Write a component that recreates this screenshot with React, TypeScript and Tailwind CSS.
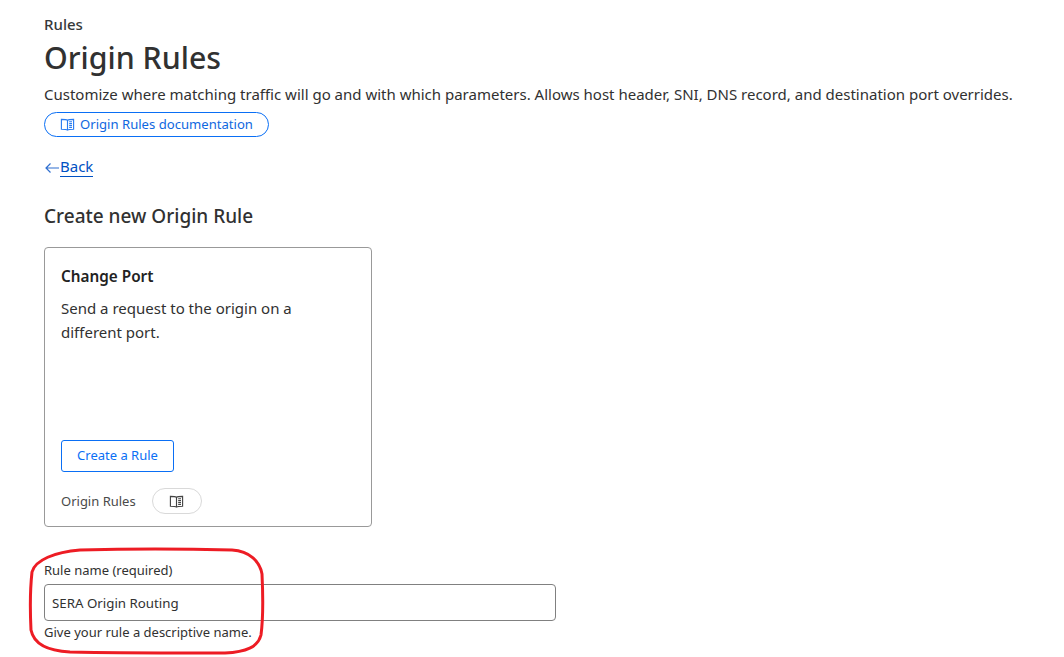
function BookIcon({ className }: { className: string }) {
  return (
    <svg viewBox="0 0 16 16" fill="none" stroke="currentColor" strokeWidth="1.2" className={className}>
      <path d="M8 3.5C7 2.8 5 2.5 1.5 2.5v10.5c3.5 0 5.5.2 6.5 1 1-.8 3-1 6.5-1V2.5C11 2.5 9 2.8 8 3.5zM8 3.5V14" />
      <path d="M9.8 5h3M9.8 7h3M9.8 9h3M9.8 11h3" />
    </svg>
  );
}

export default function App() {
  return (
    <div className="relative h-[657px] w-[1064px] overflow-hidden bg-white pl-[44px] pt-[14px] font-['Noto_Sans',sans-serif] text-[#313131]">
      <p className="text-[15px] leading-[20px] font-medium text-[#36393a]">Rules</p>
      <h1 className="text-[30.3px] leading-[40px] font-medium mt-[4px]">Origin Rules</h1>
      <p className="text-[15px] leading-[20px] mt-[6px] whitespace-nowrap">
        Customize where matching traffic will go and with which parameters. Allows host header, SNI, DNS record, and destination port overrides.
      </p>
      <a className="mt-[8px] flex h-[25px] w-[225px] items-center justify-center gap-[5px] rounded-full border border-[#0a6ff5] text-[13.1px] text-[#1068e0]">
        <BookIcon className="h-[15px] w-[15px] text-[#2a7cf0]" />
        <span>Origin Rules documentation</span>
      </a>
      <div className="mt-[17px] flex h-[24px] items-center text-[15px] text-[#0051c3]">
        <svg viewBox="0 0 16 12" fill="none" stroke="currentColor" strokeWidth="1.2" className="mt-[4px] h-[12px] w-[16px] text-[#2f6fd0]">
          <path d="M15 6H2M6.5 1.5 2 6l4.5 4.5" />
        </svg>
        <span className="border-b border-[#0051c3] leading-[20px]">Back</span>
      </div>
      <h2 className="mt-[26px] text-[19px] leading-[24px] font-medium">Create new Origin Rule</h2>

      <div className="mt-[19px] flex h-[280px] w-[328px] flex-col rounded-[4px] border border-[#999999] px-[16px] pt-[17px]">
        <h3 className="text-[15.3px] leading-[22px] font-semibold text-[#222222]">Change Port</h3>
        <p className="mt-[9px] text-[15px] leading-[24px]">
          Send a request to the origin on a
          <br />
          different port.
        </p>
        <button className="mt-[96px] h-[32px] w-[113px] rounded-[3px] border border-[#0a6ff5] text-[13px] text-[#0a6ff5]">
          Create a Rule
        </button>
        <div className="mt-[16px] flex items-center gap-[16px]">
          <span className="mt-[2px] text-[13px] text-[#4a4a4a]">Origin Rules</span>
          <span className="flex h-[26px] w-[50px] items-center justify-center rounded-full border border-[#d9d9d9]">
            <BookIcon className="h-[15px] w-[15px] text-[#444444]" />
          </span>
        </div>
      </div>

      <label className="mt-[34px] block text-[13px] leading-[18px]">Rule name (required)</label>
      <div className="mt-[5px] flex h-[37px] w-[512px] items-center rounded-[4px] border border-[#808080] px-[7px] pt-[2px] text-[13.3px]">
        SERA Origin Routing
      </div>
      <p className="mt-[1px] text-[13px] leading-[20px]">Give your rule a descriptive name.</p>

      <svg viewBox="0 0 270 117" fill="none" className="absolute left-[20px] top-[540px] h-[117px] w-[270px]">
        <path
          d="M60 10 C100 9 170 9 212 10 C230 11 240 22 242 34 C243 55 243 80 241 95 C238 107 226 112 205 113 C160 113 90 113 50 112 C30 111 14 105 11 90 C10 70 10 50 12 32 C15 20 35 12 60 10 Z"
          stroke="#ed1c24"
          strokeWidth="3"
        />
      </svg>
    </div>
  );
}
